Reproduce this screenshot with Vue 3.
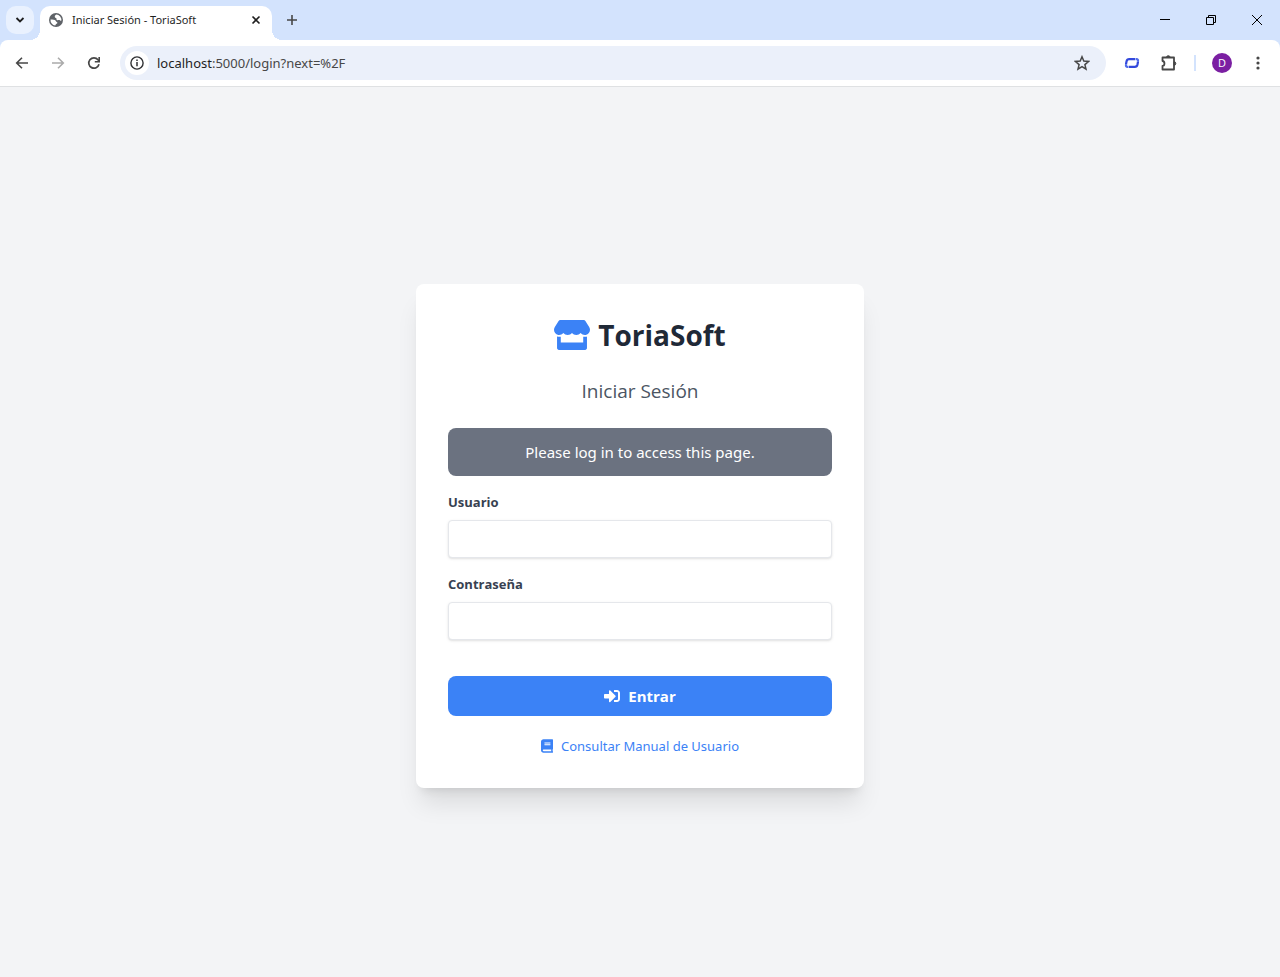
<script setup>
import { ref } from 'vue'

const address = ref('localhost:5000/login?next=%2F')
const user = ref('')
const password = ref('')
</script>

<template>
  <div class="window">
    <header class="browser">
      <div class="tabstrip">
        <button class="tab-search" type="button" aria-label="Buscar pestañas">
          <svg width="10" height="10" viewBox="0 0 10 10"><path d="M1.500 3l3.500 3.500 3.500-3.500" fill="none" stroke="#1f1f1f" stroke-width="1.800" /></svg>
        </button>
        <div class="tab">
          <svg class="globe" width="16" height="16" viewBox="0 0 16 16">
            <circle cx="8" cy="8" r="7" fill="#5f6368" />
            <path d="M8.300 2.600C7.300 3 6.600 4 6.800 4.900c.2.800 1 .7 1.400 1.200.5.600-.1 1.400.7 1.900.9.500 1.600-.3 2.600 0 .8.300.9 1 2 .6A5.600 5.600 0 0 0 8.300 2.600z" fill="#fff" />
            <path d="M2.500 7.600c1.500-.3 3.300-.2 4.400.4 1 .6.800 1.500 1.800 1.900.8.300.9 1.200.3 1.700-.6.600-1.500.6-1.700 2A5.600 5.600 0 0 1 2.500 7.600z" fill="#fff" />
          </svg>
          <span class="tab-title">Iniciar Sesión - ToriaSoft</span>
          <button class="plain tab-close" type="button" aria-label="Cerrar pestaña">
            <svg width="10" height="10" viewBox="0 0 10 10"><path d="M1.500 1.500l7 7M8.500 1.500l-7 7" stroke="#1f1f1f" stroke-width="1.600" /></svg>
          </button>
        </div>
        <button class="plain new-tab" type="button" aria-label="Nueva pestaña">
          <svg width="12" height="12" viewBox="0 0 12 12"><path d="M6 1v10M1 6h10" stroke="#474747" stroke-width="1.600" /></svg>
        </button>
        <div class="window-controls">
          <button class="plain" type="button" aria-label="Minimizar">
            <svg width="12" height="12" viewBox="0 0 12 12"><path d="M1 5.500h10" stroke="#000" /></svg>
          </button>
          <button class="plain" type="button" aria-label="Restaurar">
            <svg width="12" height="12" viewBox="0 0 12 12"><path d="M1.500 3.500h7v7h-7zM3.500 3.500v-2h7v7h-2" fill="none" stroke="#000" /></svg>
          </button>
          <button class="plain" type="button" aria-label="Cerrar">
            <svg width="12" height="12" viewBox="0 0 12 12"><path d="M1 1l10 10M11 1L1 11" stroke="#000" /></svg>
          </button>
        </div>
      </div>

      <div class="toolbar">
        <nav class="nav">
          <button class="plain" type="button" aria-label="Atrás">
            <svg width="16" height="16" viewBox="0 0 16 16"><path d="M14 8H3M8 2.700L2.700 8 8 13.300" fill="none" stroke="#474747" stroke-width="1.600" /></svg>
          </button>
          <button class="plain" type="button" aria-label="Adelante" disabled>
            <svg width="16" height="16" viewBox="0 0 16 16"><path d="M2 8h11M8 2.700L13.300 8 8 13.300" fill="none" stroke="#ababab" stroke-width="1.600" /></svg>
          </button>
          <button class="plain" type="button" aria-label="Recargar">
            <svg width="16" height="16" viewBox="0 0 16 16"><path d="M13 9.300A5.200 5.200 0 1 1 12 4.700L13 6" fill="none" stroke="#474747" stroke-width="1.700" /><path d="M13.200 2v4.700H8.800" fill="none" stroke="#474747" stroke-width="1.600" /></svg>
          </button>
        </nav>
        <div class="omnibox">
          <button class="plain site-info" type="button" aria-label="Información del sitio">
            <svg width="14" height="14" viewBox="0 0 14 14"><circle cx="7" cy="7" r="6.100" fill="none" stroke="#303134" stroke-width="1.400" /><path d="M7 6v4.300M7 3.500v1.500" stroke="#303134" stroke-width="1.500" /></svg>
          </button>
          <div class="address" role="textbox" aria-label="Dirección" tabindex="0"><b>{{ address.slice(0, 9) }}</b>{{ address.slice(9) }}</div>
          <button class="plain star" type="button" aria-label="Añadir a marcadores">
            <svg width="16" height="16" viewBox="0 0 16 16"><path d="M8 1.800l1.800 4.300 4.700.4-3.600 3.100 1.100 4.600L8 11.700l-4 2.500 1.100-4.600-3.600-3.100 4.700-.4z" fill="none" stroke="#474747" stroke-width="1.500" /></svg>
          </button>
        </div>
        <div class="extensions">
          <button class="plain" type="button" aria-label="Extensión">
            <svg width="16" height="16" viewBox="0 0 16 16"><path d="M2 9.300l.5-2.800Q3 4.200 5.200 4.200H11M14 6.700l-.5 2.800Q13 11.800 10.800 11.800H5" fill="none" stroke="#3349dc" stroke-width="2.200" /><path d="M11.500 4.200h1q1.800 0 1.500 2l-.1.600M4.500 11.800h-1q-1.800 0-1.500-2l.1-.6" fill="none" stroke="#4f6bea" stroke-width="2.200" /></svg>
          </button>
          <button class="plain" type="button" aria-label="Extensiones">
            <svg width="18" height="18" viewBox="0 0 18 18"><path d="M3.500 3.500h11.500v12H3.500V12c2.600-.3 2.600-4.700 0-5z" fill="none" stroke="#474747" stroke-width="1.800" stroke-linejoin="round" /><path d="M7.500 3.500a1.800 1.800 0 0 1 3.600 0zM15 7.700a1.800 1.800 0 0 1 0 3.600z" fill="#474747" stroke="#474747" /></svg>
          </button>
          <span class="divider"></span>
          <button class="avatar" type="button">D</button>
          <button class="plain" type="button" aria-label="Menú">
            <svg width="16" height="16" viewBox="0 0 16 16" fill="#474747"><circle cx="8" cy="3" r="1.600" /><circle cx="8" cy="8" r="1.600" /><circle cx="8" cy="13" r="1.600" /></svg>
          </button>
        </div>
      </div>
    </header>

    <main class="page">
      <section class="card">
        <h1 class="brand">
          <svg width="36" height="30" viewBox="0 0 616 512" fill="#3b82f6"><path d="M602 118.600L537.100 15C531.300 5.700 521 0 510 0H106C95 0 84.700 5.700 78.900 15L14 118.600c-33.500 53.500-3.800 127.900 58.800 136.400 4.500.6 9.100.9 13.700.9 29.600 0 55.800-13 73.800-33.100 18 20.100 44.300 33.100 73.800 33.100 29.600 0 55.800-13 73.800-33.100 18 20.100 44.300 33.100 73.800 33.100 29.600 0 55.800-13 73.800-33.100 18.100 20.100 44.300 33.100 73.800 33.100 4.700 0 9.200-.3 13.700-.9 62.800-8.400 92.600-82.800 59-136.400zM529.500 288c-10 0-19.900-1.500-29.500-3.800V384H116v-99.800c-9.600 2.200-19.500 3.800-29.500 3.800-6 0-12.100-.4-18-1.200-5.600-.8-11.100-2.100-16.400-3.600V480c0 17.700 14.300 32 32 32h448c17.700 0 32-14.300 32-32V283.200c-5.400 1.600-10.800 2.900-16.400 3.600-6.100.8-12.100 1.200-18.200 1.200z" /></svg>
          <span>ToriaSoft</span>
        </h1>
        <h2 class="subtitle">Iniciar Sesión</h2>
        <p class="alert" role="alert">Please log in to access this page.</p>
        <form @submit.prevent>
          <div class="field">
            <label for="username">Usuario</label>
            <input id="username" v-model="user" type="text" autocomplete="off" />
          </div>
          <div class="field">
            <label for="password">Contraseña</label>
            <input id="password" v-model="password" type="password" autocomplete="off" />
          </div>
          <button class="submit" type="submit">
            <svg width="16" height="16" viewBox="0 0 512 512" fill="#fff"><path d="M416 448h-84c-6.600 0-12-5.400-12-12v-40c0-6.600 5.400-12 12-12h84c17.700 0 32-14.300 32-32V160c0-17.700-14.300-32-32-32h-84c-6.600 0-12-5.400-12-12V76c0-6.600 5.400-12 12-12h84c53 0 96 43 96 96v192c0 53-43 96-96 96zm-47-201L201 79c-15-15-41-4.500-41 17v96H24c-13.300 0-24 10.700-24 24v96c0 13.300 10.700 24 24 24h136v96c0 21.500 26 32 41 17l168-168c9.300-9.400 9.300-24.600 0-34z" /></svg>
            Entrar
          </button>
        </form>
        <a class="manual" href="#manual">
          <svg width="12" height="14" viewBox="0 0 448 512" fill="#3b82f6"><path d="M448 360V24c0-13.300-10.700-24-24-24H96C43 0 0 43 0 96v320c0 53 43 96 96 96h328c13.300 0 24-10.700 24-24v-16c0-7.500-3.500-14.300-8.900-18.700-4.200-15.400-4.200-59.300 0-74.700 5.400-4.300 8.900-11.100 8.900-18.600zM128 134c0-3.300 2.700-6 6-6h212c3.300 0 6 2.700 6 6v20c0 3.300-2.700 6-6 6H134c-3.300 0-6-2.700-6-6v-20zm0 64c0-3.300 2.700-6 6-6h212c3.300 0 6 2.700 6 6v20c0 3.300-2.700 6-6 6H134c-3.300 0-6-2.700-6-6v-20zm253.400 250H96c-17.700 0-32-14.300-32-32 0-17.600 14.400-32 32-32h285.400c-1.900 17.100-1.900 46.900 0 64z" /></svg>
          Consultar Manual de Usuario
        </a>
      </section>
    </main>
  </div>
</template>

<style>
body {
  margin: 0;
}
</style>

<style scoped>
.window {
  display: flex;
  flex-direction: column;
  min-height: 100vh;
  background: #f3f4f6;
  font-family: "Segoe UI", "Open Sans", "Noto Sans", sans-serif;
}
.window *,
.window *::before,
.window *::after {
  box-sizing: border-box;
}
.tab-title,
.address,
.alert,
.manual {
  font-family: "Segoe UI", "Noto Sans", "Open Sans", sans-serif;
}
svg {
  display: block;
  flex: none;
}
button {
  font-family: inherit;
  border: 0;
  cursor: pointer;
}
.plain {
  display: flex;
  align-items: center;
  justify-content: center;
  padding: 0;
  background: none;
}
.browser {
  background: #d3e3fd;
}
.tabstrip {
  display: flex;
  align-items: center;
  height: 40px;
  padding-left: 6px;
}
.tab-search {
  display: flex;
  align-items: center;
  justify-content: center;
  width: 28px;
  height: 28px;
  padding: 0;
  border-radius: 10px;
  background: #e9f1fe;
}
.tab {
  position: relative;
  display: flex;
  align-items: center;
  align-self: flex-end;
  gap: 8px;
  width: 232px;
  height: 34px;
  margin-left: 6px;
  padding: 0 8px 6px;
  border-radius: 10px 10px 0 0;
  background: #fff;
}
.tab::before,
.tab::after {
  content: "";
  position: absolute;
  bottom: 0;
  width: 10px;
  height: 10px;
}
.tab::before {
  right: 100%;
  background: radial-gradient(circle at 0 0, transparent 10px, #fff 10px);
}
.tab::after {
  left: 100%;
  background: radial-gradient(circle at 100% 0, transparent 10px, #fff 10px);
}
.tab-title {
  flex: 1;
  color: #1f1f1f;
  font-size: 11px;
  line-height: 16px;
  white-space: nowrap;
}
.tab-close {
  width: 16px;
  height: 16px;
}
.new-tab {
  width: 28px;
  height: 28px;
  margin-left: 6px;
}
.window-controls {
  display: flex;
  margin-left: auto;
}
.window-controls .plain {
  width: 46px;
  height: 40px;
}
.toolbar {
  display: flex;
  align-items: center;
  height: 47px;
  padding: 0 8px 0 4px;
  border-bottom: 1px solid #dfe1e3;
  border-radius: 8px 8px 0 0;
  background: #fff;
}
.nav {
  display: flex;
  margin-right: 8px;
}
.nav .plain {
  width: 36px;
  height: 34px;
}
.omnibox {
  display: flex;
  flex: 1;
  align-items: center;
  height: 34px;
  padding: 0 12px 0 5px;
  border-radius: 17px;
  background: #ebf0fa;
}
.site-info {
  width: 24px;
  height: 24px;
  border-radius: 50%;
  background: #fff;
}
.address {
  flex: 1;
  padding-left: 8px;
  color: #474747;
  font-size: 13px;
  line-height: 20px;
}
.address b {
  color: #1f1f1f;
  font-weight: 400;
}
.star {
  width: 24px;
  height: 24px;
}
.extensions {
  display: flex;
  align-items: center;
  margin-left: 8px;
}
.extensions .plain {
  width: 36px;
  height: 34px;
}
.extensions .plain:last-child {
  width: 28px;
}
.divider {
  width: 2px;
  height: 16px;
  margin: 0 16px 0 8px;
  background: #d3e3fd;
}
.avatar {
  width: 20px;
  height: 20px;
  margin-right: 12px;
  padding: 0;
  border-radius: 50%;
  background: #7b1fa2;
  color: #fff;
  font-size: 11px;
  line-height: 20px;
}
.page {
  display: flex;
  flex: 1;
  align-items: center;
  justify-content: center;
  padding: 24px 16px 16px;
}
.card {
  width: 100%;
  max-width: 448px;
  padding: 32px;
  border-radius: 8px;
  background: #fff;
  box-shadow: 0 20px 25px -5px rgba(0, 0, 0, 0.1), 0 8px 10px -6px rgba(0, 0, 0, 0.1);
}
.brand {
  display: flex;
  align-items: center;
  justify-content: center;
  gap: 8px;
  margin: 0 0 22px;
  color: #1f2937;
  font-size: 28px;
  font-weight: 700;
  line-height: 38px;
}
.subtitle {
  margin: 0 0 22px;
  color: #4b5563;
  font-size: 19px;
  font-weight: 400;
  line-height: 30px;
  text-align: center;
}
.alert {
  margin: 0 0 16px;
  padding: 12px;
  border-radius: 8px;
  background: #6b7280;
  color: #fff;
  font-size: 15px;
  line-height: 24px;
  text-align: center;
}
.field {
  margin-bottom: 16px;
}
.field label {
  display: block;
  margin-bottom: 8px;
  color: #374151;
  font-size: 13px;
  font-weight: 700;
  line-height: 20px;
}
.field input {
  display: block;
  width: 100%;
  height: 38px;
  padding: 8px 12px;
  border: 1px solid #e5e7eb;
  border-radius: 4px;
  background: #fff;
  box-shadow: 0 1px 3px rgba(0, 0, 0, 0.1), 0 1px 2px -1px rgba(0, 0, 0, 0.1);
  color: #374151;
  font: inherit;
}
.submit {
  display: flex;
  align-items: center;
  justify-content: center;
  gap: 8px;
  width: 100%;
  margin-top: 36px;
  padding: 8px 16px;
  border-radius: 8px;
  background: #3b82f6;
  color: #fff;
  font-size: 15px;
  font-weight: 700;
  line-height: 24px;
}
.manual {
  display: flex;
  align-items: center;
  justify-content: center;
  gap: 8px;
  margin-top: 20px;
  color: #3b82f6;
  font-size: 13px;
  line-height: 20px;
  text-decoration: none;
}
</style>
